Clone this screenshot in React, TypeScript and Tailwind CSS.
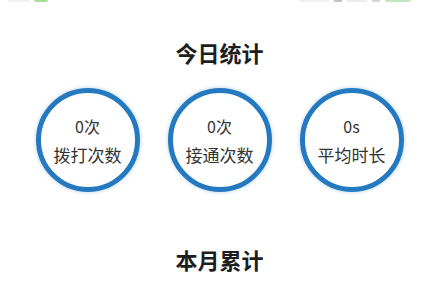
import React from "react";

const stats = [
  { value: "0次", label: "拨打次数" },
  { value: "0次", label: "接通次数" },
  { value: "0s", label: "平均时长" },
];

export default function App() {
  return (
    <div
      className="w-[439px] h-[295px] bg-white overflow-hidden flex flex-col"
      style={{ fontFamily: '"Noto Sans CJK SC", "Noto Sans", sans-serif' }}
    >
      <div className="h-[4px] flex items-start px-[8px]">
        <div className="flex items-center gap-[4px]">
          <div className="w-[22px] h-[2px] bg-[#f0f0f0]" />
          <div className="w-[14px] h-[2px] rounded-b-[2px] bg-[#a8dc9c]" />
        </div>
        <div className="flex-1" />
        <div className="flex items-center gap-[5px] mr-[20px]">
          <div className="w-[30px] h-[2px] bg-[#f0f0f0]" />
          <div className="w-[8px] h-[2px] bg-[#c4c4c4]" />
          <div className="w-[20px] h-[2px] bg-[#ececec]" />
          <div className="w-[8px] h-[2px] bg-[#d6d6d6]" />
          <div className="w-[26px] h-[2px] rounded-b-[2px] bg-[#c6e6bf]" />
        </div>
      </div>
      <div className="mt-[34px] h-[28px] flex items-center justify-center text-[22px] leading-[28px] font-bold text-[#1e1e1e]">
        今日统计
      </div>
      <div className="mt-[22px] flex justify-center gap-[28px]">
        {stats.map((s, i) => (
          <div
            key={i}
            className="w-[104px] h-[104px] rounded-full border-[5px] border-[#2479c0] shadow-[0_0_4px_rgba(36,121,192,0.35)] flex flex-col items-center justify-center text-[#333]"
          >
            <div className="text-[16px] leading-[20px] mt-[2px]">{s.value}</div>
            <div className="text-[17px] leading-[22px] mt-[8px]">{s.label}</div>
          </div>
        ))}
      </div>
      <div className="mt-[53px] h-[28px] flex items-center justify-center text-[22px] leading-[28px] font-bold text-[#1e1e1e]">
        本月累计
      </div>
    </div>
  );
}
